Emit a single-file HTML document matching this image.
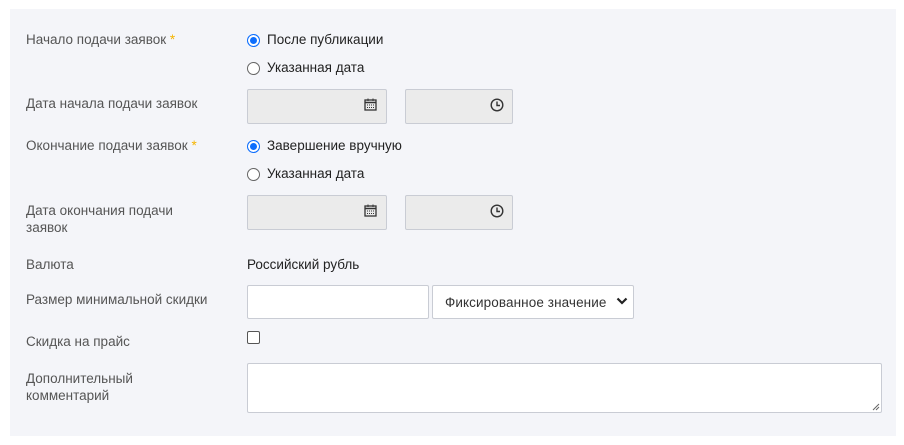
<!DOCTYPE html>
<html><head><meta charset="utf-8"><style>
body{margin:0;background:#fff;width:904px;height:445px;position:relative;font-family:"Liberation Sans","DejaVu Sans",sans-serif;font-size:13.5px;overflow:hidden}
.panel{position:absolute;left:10px;top:9px;width:886px;height:427px;background:#f4f5f9}
.l{position:absolute;left:26px;color:#555;line-height:17px}
.t{position:absolute;left:267px;color:#222;line-height:17px}
.star{color:#f5b400}
.r{position:absolute;left:247px;width:11px;height:11px;border:1px solid #666;border-radius:50%;background:#fff}
.r.on{border-color:#0d6efd;background:#0d6efd;box-shadow:inset 0 0 0 2px #fff}
.in{position:absolute;border:1px solid #c9ccd4;border-radius:2px;background:#fff;box-sizing:border-box}
.dis{background:#ebebeb}
svg{position:absolute}
</style></head><body>
<div class="panel"></div>
<div class="l" style="top:31px">Начало подачи заявок <span class="star">*</span></div>
<div class="r on" style="top:34px"></div><div class="t" style="top:31px">После публикации</div>
<div class="r" style="top:62px"></div><div class="t" style="top:59px">Указанная дата</div>
<div class="l" style="top:95px">Дата начала подачи заявок</div>
<div class="in dis" style="left:247px;top:89px;width:140px;height:35px"></div>
<svg style="left:364px;top:98px" width="13" height="13" viewBox="0 0 13 13"><rect x="1" y="2" width="11" height="10" fill="none" stroke="#333" stroke-width="1.3"/><line x1="1" y1="4.5" x2="12" y2="4.5" stroke="#333" stroke-width="1.5"/><line x1="4" y1="0.5" x2="4" y2="3" stroke="#333"/><line x1="9" y1="0.5" x2="9" y2="3" stroke="#333"/><path d="M3 7h7M3 9.5h7" stroke="#333" stroke-dasharray="1 1"/></svg>
<div class="in dis" style="left:405px;top:89px;width:108px;height:35px"></div>
<svg style="left:490px;top:98px" width="14" height="14" viewBox="0 0 14 14"><circle cx="7" cy="7" r="5.8" fill="none" stroke="#333" stroke-width="1.4"/><path d="M7 3.5V7.5H10" fill="none" stroke="#333" stroke-width="1.4"/></svg>
<div class="l" style="top:137px">Окончание подачи заявок <span class="star">*</span></div>
<div class="r on" style="top:140px"></div><div class="t" style="top:137px">Завершение вручную</div>
<div class="r" style="top:168px"></div><div class="t" style="top:165px">Указанная дата</div>
<div class="l" style="top:202px">Дата окончания подачи<br>заявок</div>
<div class="in dis" style="left:247px;top:195px;width:140px;height:35px"></div>
<svg style="left:364px;top:204px" width="13" height="13" viewBox="0 0 13 13"><rect x="1" y="2" width="11" height="10" fill="none" stroke="#333" stroke-width="1.3"/><line x1="1" y1="4.5" x2="12" y2="4.5" stroke="#333" stroke-width="1.5"/><line x1="4" y1="0.5" x2="4" y2="3" stroke="#333"/><line x1="9" y1="0.5" x2="9" y2="3" stroke="#333"/><path d="M3 7h7M3 9.5h7" stroke="#333" stroke-dasharray="1 1"/></svg>
<div class="in dis" style="left:405px;top:195px;width:108px;height:35px"></div>
<svg style="left:490px;top:204px" width="14" height="14" viewBox="0 0 14 14"><circle cx="7" cy="7" r="5.8" fill="none" stroke="#333" stroke-width="1.4"/><path d="M7 3.5V7.5H10" fill="none" stroke="#333" stroke-width="1.4"/></svg>
<div class="l" style="top:256px">Валюта</div>
<div class="t" style="top:256px;left:247px">Российский рубль</div>
<div class="l" style="top:291px">Размер минимальной скидки</div>
<div class="in" style="left:247px;top:285px;width:182px;height:34px"></div>
<div class="in" style="left:432px;top:285px;width:202px;height:34px"></div>
<div class="t" style="left:445px;top:294px;color:#333;letter-spacing:0.1px">Фиксированное значение</div>
<svg style="left:616px;top:296px" width="12" height="10" viewBox="0 0 12 10"><path d="M1.5 2.5L6 7L10.5 2.5" fill="none" stroke="#222" stroke-width="2.2"/></svg>
<div class="l" style="top:333px">Скидка на прайс</div>
<div style="position:absolute;left:247px;top:331px;width:11px;height:11px;border:1px solid #555;border-radius:2px;background:#fff"></div>
<div class="l" style="top:370px">Дополнительный<br>комментарий</div>
<div class="in" style="left:247px;top:363px;width:635px;height:50px"></div>
<svg style="left:872px;top:403px" width="8" height="8" viewBox="0 0 8 8"><path d="M1 7L7 1M4 7L7 4" stroke="#666"/></svg>
</body></html>
